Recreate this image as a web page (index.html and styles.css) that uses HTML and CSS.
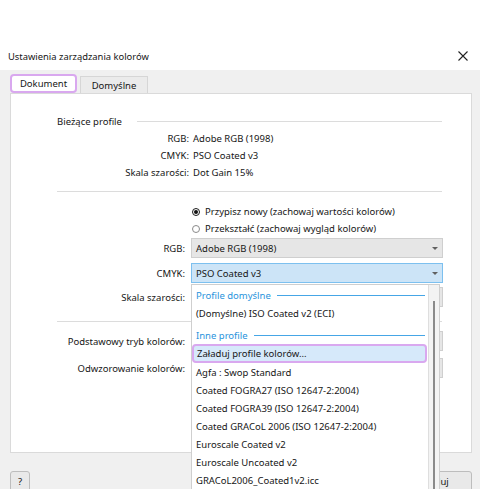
FILE: index.html
```html
<!DOCTYPE html>
<html lang="pl">
<head>
<meta charset="utf-8">
<title>Ustawienia zarządzania kolorów</title>
<link rel="stylesheet" href="styles.css">
</head>
<body>
<div class="dialog">
  <div class="titlebar">
    <span class="title">Ustawienia zarządzania kolorów</span>
    <svg class="close" width="10" height="10" viewBox="0 0 10 10"><path d="M0.5 0.5 L9.5 9.5 M9.5 0.5 L0.5 9.5" stroke="#222" stroke-width="1.1" fill="none"/></svg>
  </div>
  <div class="body">
    <div class="tabs">
      <div class="tab active">Dokument</div>
      <div class="tab">Domyślne</div>
    </div>
    <div class="panel">
      <div class="group-head"><span>Bieżące profile</span><div class="rule"></div></div>
      <div class="row"><span class="lbl">RGB:</span><span class="val">Adobe RGB (1998)</span></div>
      <div class="row"><span class="lbl">CMYK:</span><span class="val">PSO Coated v3</span></div>
      <div class="row"><span class="lbl">Skala szarości:</span><span class="val">Dot Gain 15%</span></div>
      <div class="sep sep1"></div>
      <div class="radio-row first"><span class="radio on"></span>Przypisz nowy (zachowaj wartości kolorów)</div>
      <div class="radio-row"><span class="radio"></span>Przekształć (zachowaj wygląd kolorów)</div>
      <div class="field-row r-rgb"><span class="flbl">RGB:</span><div class="select">Adobe RGB (1998)<span class="arrow"></span></div></div>
      <div class="field-row r-cmyk"><span class="flbl">CMYK:</span><div class="select focus">PSO Coated v3<span class="arrow"></span></div></div>
      <div class="field-row r-gray"><span class="flbl">Skala szarości:</span><div class="select"><span class="arrow"></span></div></div>
      <div class="sep sep2"></div>
      <div class="field-row r-mode"><span class="flbl">Podstawowy tryb kolorów:</span><div class="select"><span class="arrow"></span></div></div>
      <div class="field-row r-intent"><span class="flbl">Odwzorowanie kolorów:</span><div class="select"><span class="arrow"></span></div></div>
    </div>
    <div class="footer">
      <button class="btn help">?</button>
      <div class="actions">
        <button class="btn wide"></button>
        <button class="btn wide">Anuluj</button>
      </div>
    </div>
  </div>
  <div class="dropdown">
    <div class="list">
      <div class="group"><span>Profile domyślne</span><div class="grule"></div></div>
      <div class="item">(Domyślne) ISO Coated v2 (ECI)</div>
      <div class="group g2"><span>Inne profile</span><div class="grule"></div></div>
      <div class="item hl">Załaduj profile kolorów...</div>
      <div class="item">Agfa : Swop Standard</div>
      <div class="item">Coated FOGRA27 (ISO 12647-2:2004)</div>
      <div class="item">Coated FOGRA39 (ISO 12647-2:2004)</div>
      <div class="item">Coated GRACoL 2006 (ISO 12647-2:2004)</div>
      <div class="item">Euroscale Coated v2</div>
      <div class="item">Euroscale Uncoated v2</div>
      <div class="item">GRACoL2006_Coated1v2.icc</div>
    </div>
    <div class="scroll"><div class="thumb"></div></div>
  </div>
</div>
</body>
</html>
```

FILE: styles.css
```css
* { box-sizing: border-box; }
html, body { margin: 0; height: 100%; }
body {
  background: #ffffff;
  font-family: "Noto Sans", "Open Sans", sans-serif;
  font-size: 9.5px;
  color: #161616;
  overflow: hidden;
}
.dialog {
  position: relative;
  margin-top: 42px;
  height: 447px;
  overflow: hidden;
}
.titlebar {
  height: 28px;
  background: #ffffff;
  display: flex;
  align-items: center;
  justify-content: space-between;
  padding: 0 12px 0 8px;
}
.title { font-size: 9.4px; }
.close { display: block; }
.body {
  background: #f0f0f0;
  height: 419px;
  padding: 4px 8px 0 10px;
}
.tabs {
  display: flex;
  gap: 3px;
  height: 19px;
  align-items: flex-end;
}
.tab {
  height: 17px;
  width: 68px;
  justify-content: center;
  display: flex;
  align-items: center;
  background: #ebebeb;
  border: 1px solid #d6d6d6;
  border-bottom: none;
}
.tab.active {
  height: 19px;
  width: 67px;
  background: #ffffff;
  border: 2px solid #d9a8ef;
  border-radius: 4px;
}
.panel {
  background: #ffffff;
  border: 1px solid #dadada;
  height: 360px;
  padding-top: 19px;
}
.group-head {
  display: flex;
  align-items: center;
  height: 16px;
  padding-left: 46px;
  padding-right: 29px;
}
.rule { flex: 1; height: 1px; background: #dcdcdc; margin-left: 15px; }
.row {
  display: flex;
  height: 17px;
  align-items: center;
}
.group-head + .row { margin-top: 1px; }
.lbl { width: 178px; text-align: right; }
.val { margin-left: 4px; }
.sep { height: 1px; background: #dcdcdc; margin-left: 46px; margin-right: 29px; }
.sep1 { margin-top: 10px; }
.radio-row {
  display: flex;
  align-items: center;
  height: 17px;
  padding-left: 181px;
}
.radio-row.first { margin-top: 11px; }
.radio {
  width: 8px; height: 8px;
  border: 1px solid #8a8a8a;
  border-radius: 50%;
  background: #fff;
  margin-right: 5px;
  position: relative;
}
.radio.on { border-color: #1a1a1a; }
.radio.on::after {
  content: "";
  position: absolute;
  left: 1px; top: 1px;
  width: 4px; height: 4px;
  border-radius: 50%;
  background: #111;
}
.field-row {
  display: flex;
  align-items: center;
  height: 20px;
}
.flbl { width: 174px; text-align: right; margin-right: 6px; }
.select {
  position: relative;
  width: 252px;
  height: 20px;
  background: #e6e6e6;
  border: 1px solid #cfcfcf;
  display: flex;
  align-items: center;
  padding-left: 4px;
}
.select.focus { background: #cce4f7; border-color: #7cc0ef; }
.arrow {
  position: absolute;
  right: 4px; top: 8px;
  width: 0; height: 0;
  border-left: 3px solid transparent;
  border-right: 3px solid transparent;
  border-top: 3px solid #606060;
}
.r-rgb { margin-top: 1px; }
.r-cmyk { margin-top: 5px; }
.r-gray { margin-top: 4px; }
.sep2 { margin-top: 14px; }
.r-mode { margin-top: 9px; }
.r-intent { margin-top: 7px; }
.footer {
  display: flex;
  justify-content: space-between;
  margin-top: 18px;
}
.btn {
  font-family: inherit;
  font-size: 9.5px;
  color: #161616;
  height: 21px;
  background: #e9e9e9;
  border: 1px solid #bdbdbd;
  border-radius: 3px;
  padding: 0;
}
.help { width: 20px; }
.actions { display: flex; gap: 6px; }
.wide { width: 75px; }
.dropdown {
  position: absolute;
  left: 191px;
  top: 242px;
  width: 249px;
  height: 210px;
  background: #ffffff;
  border: 1px solid #cfcfcf;
  border-bottom: none;
  display: flex;
}
.list { flex: 1; padding-top: 1px; }
.group {
  display: flex;
  align-items: center;
  height: 18px;
  padding-left: 4px;
  padding-right: 3px;
  color: #2a93dc;
}
.g2 { margin-top: 4px; }
.grule { flex: 1; height: 1px; background: #46a6e6; margin-left: 6px; }
.item {
  height: 18px;
  display: flex;
  align-items: center;
  padding-left: 4px;
  white-space: nowrap;
}
.item.hl {
  height: 19px;
  margin-right: 1px;
  padding-left: 3px;
  background: #d6e9fa;
  border: 2px solid #d9a8ef;
  border-radius: 4px;
}
.scroll {
  width: 11px;
  background: #f3f3f3;
  border-left: 1px solid #dedede;
  position: relative;
}
.thumb {
  position: absolute;
  left: 4px;
  top: 16px;
  bottom: 0;
  width: 2px;
  background: #8a8a8a;
}
```
